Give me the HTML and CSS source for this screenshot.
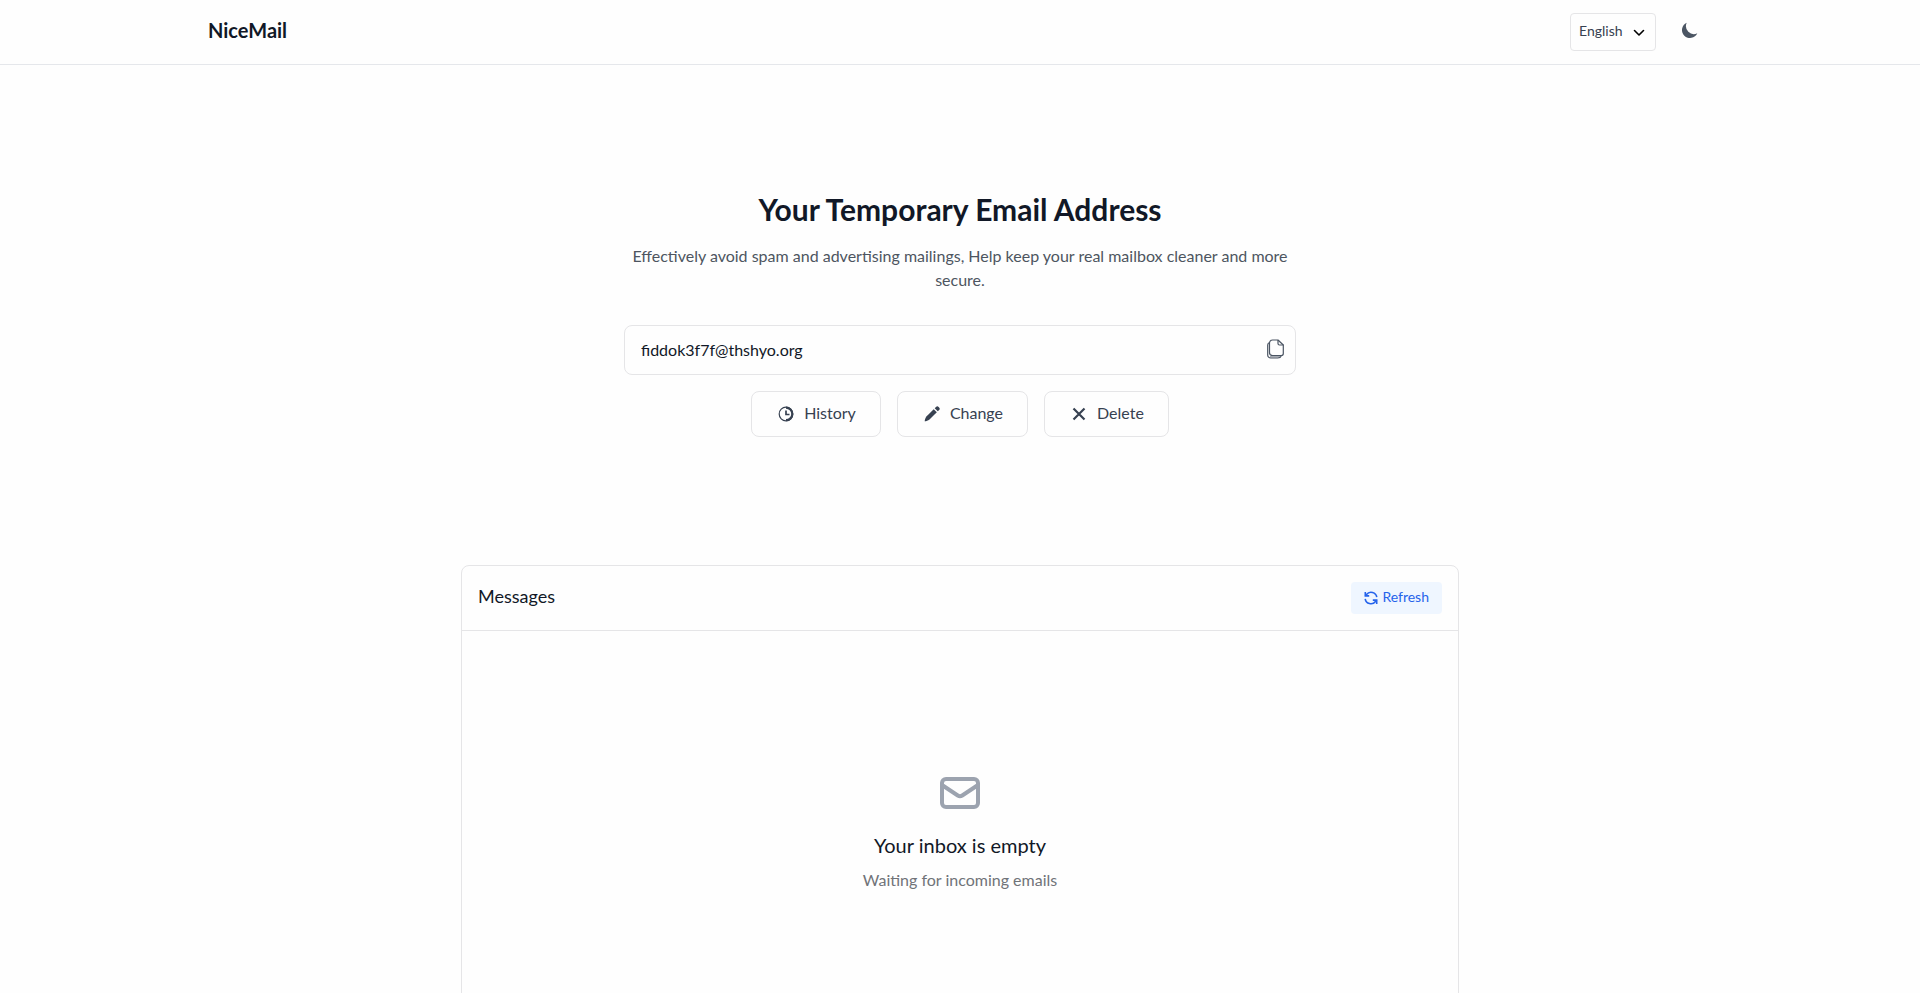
FILE: index.html
```html
<!DOCTYPE html>
<html lang="en">
<head>
  <meta charset="UTF-8">
  <meta name="viewport" content="width=device-width, initial-scale=1.0">
  <title>NiceMail</title>
  <link rel="stylesheet" href="styles.css">
</head>
<body>
  <header class="header">
    <div class="container nav">
      <a class="logo" href="/">NiceMail</a>
      <div class="nav-right">
        <div class="lang">
          <select id="lang" class="lang-select" aria-label="Language">
            <option>English</option>
          </select>
          <svg class="lang-arrow" viewBox="0 0 12 8" aria-hidden="true"><path d="M1.500 1.500 6 6l4.500-4.500" fill="none" stroke="currentColor" stroke-width="1.600" stroke-linecap="round" stroke-linejoin="round"/></svg>
        </div>
        <button id="theme" class="theme-btn" type="button" aria-label="Dark mode">
          <svg viewBox="0 0 20 20" fill="currentColor"><path d="M17.293 13.293A8 8 0 016.707 2.707a8.001 8.001 0 1010.586 10.586z"/></svg>
        </button>
      </div>
    </div>
  </header>

  <main>
    <section class="hero">
      <h1>Your Temporary Email Address</h1>
      <p>Effectively avoid spam and advertising mailings, Help keep your real mailbox cleaner and more secure.</p>
      <div class="address">
        <input type="text" id="email" aria-label="Email address" value="fiddok3f7f@thshyo.org" readonly>
        <button id="copy" class="copy-btn" type="button" aria-label="Copy">
          <svg viewBox="0 0 20 20" fill="none" stroke="currentColor" stroke-linejoin="round">
            <path d="M3.500 3.500C2 4 1.700 4.500 1.700 6v10a3 3 0 0 0 3 3h7c2 0 3-.5 3.500-2" stroke-width="1.200"/>
            <path d="M4 17.700h10" stroke-width="1.600" opacity=".5"/>
            <path d="M6.500 1h5.500l5.300 5v8.500a2 2 0 0 1-2 2H6.500a3 3 0 0 1-3-3V4a3 3 0 0 1 3-3z" stroke-width="1.200"/>
            <path d="M12 1v3.500A1.500 1.500 0 0 0 13.500 6h4" stroke-width="1.200"/>
          </svg>
        </button>
      </div>
      <div class="actions">
        <button id="history" class="btn" type="button">
          <svg viewBox="0 0 16 16" fill="none" stroke="currentColor"><path d="M8 1.200a6.800 6.800 0 1 0 0 13.600A6.800 6.800 0 0 0 8 1.200" stroke-width="1.200"/><path d="M8 1.600a6.200 6.200 0 0 1 0 12.600" stroke-width="2.200"/><path d="M8 4.500v4h3.500" stroke-width="1.700"/></svg>
          History
        </button>
        <button id="change" class="btn" type="button">
          <svg viewBox="0 0 16 16" fill="currentColor"><path d="M9.700 3.200l3.100 3.100-7.300 7.200C4 14.600 2.200 15.300.7 15.300c0-1.500.6-3.400 1.700-4.900z"/><path d="M10.700 2.200 12 .9a1.800 1.800 0 0 1 2.600 0l.5.500a1.800 1.800 0 0 1 0 2.600l-1.300 1.300z"/></svg>
          Change
        </button>
        <button id="delete" class="btn" type="button">
          <svg viewBox="0 0 16 16" fill="none" stroke="currentColor" stroke-width="2.200"><path d="M2.500 2.500l11 11M13.500 2.500l-11 11"/></svg>
          Delete
        </button>
      </div>
    </section>

    <section class="messages">
      <div class="messages-head">
        <h2>Messages</h2>
        <button id="refresh" class="refresh-btn" type="button">
          <svg viewBox="0 0 14 14" fill="none" stroke="currentColor" stroke-width="1.600"><path d="M12.800 6.200A5.800 5.800 0 0 0 2.500 3.500L1.300 4.700M1.200 7.800a5.800 5.800 0 0 0 10.300 2.700l1.200-1.200"/><path d="M1.300 1v3.900h3.900M12.700 13V9.100H8.800"/></svg>
          Refresh
        </button>
      </div>
      <div class="empty">
        <svg viewBox="0 0 24 24" fill="none" stroke="currentColor" stroke-width="2" stroke-linecap="round" stroke-linejoin="round"><path d="M3 8l7.890 5.260a2 2 0 002.220 0L21 8M5 19h14a2 2 0 002-2V7a2 2 0 00-2-2H5a2 2 0 00-2 2v10a2 2 0 002 2z"/></svg>
        <h3>Your inbox is empty</h3>
        <p>Waiting for incoming emails</p>
      </div>
    </section>
  </main>
</body>
</html>
```

FILE: styles.css
```css
* {
  box-sizing: border-box;
}
body {
  margin: 0;
  font-family: Lato, sans-serif;
  font-size: 16px;
  line-height: 24px;
  color: #111827;
  background: #fefefe;
  overflow: hidden;
}
h1, h2, h3, p {
  margin: 0;
}
button, input, select {
  font: inherit;
  color: inherit;
}
button {
  cursor: pointer;
}
svg {
  display: block;
}
.header {
  border-bottom: 1px solid #e5e7eb;
}
.container {
  max-width: 1536px;
  margin: 0 auto;
  padding: 0 16px;
}
.nav {
  display: flex;
  align-items: center;
  justify-content: space-between;
  height: 64px;
}
.logo {
  padding-bottom: 4px;
  font-size: 20px;
  font-weight: 700;
  line-height: 28px;
  color: #111827;
  text-decoration: none;
}
.nav-right {
  display: flex;
  align-items: center;
  gap: 12px;
}
.lang {
  position: relative;
}
.lang-select {
  width: 86px;
  height: 38px;
  padding: 0 8px 2px;
  font-size: 14px;
  color: #374151;
  background: transparent;
  border: 1px solid #e5e5e7;
  border-radius: 4px;
  appearance: none;
}
.lang-arrow {
  position: absolute;
  right: 11px;
  top: 16px;
  width: 12px;
  height: 8px;
  color: #000;
  pointer-events: none;
}
.theme-btn {
  padding: 10px 12px 14px;
  color: #4b5563;
  background: none;
  border: 0;
}
.theme-btn svg {
  width: 20px;
  height: 20px;
}
.hero {
  max-width: 672px;
  margin: 0 auto;
  padding: 124px 0 128px;
  text-align: center;
}
.hero h1 {
  font-size: 30px;
  font-weight: 700;
  line-height: 40px;
}
.hero p {
  margin-top: 15px;
  color: #4d5560;
}
.address {
  position: relative;
  margin-top: 33px;
}
.address input {
  display: block;
  width: 100%;
  height: 50px;
  padding: 0 48px 2px 16px;
  background: transparent;
  border: 1px solid #e5e5e7;
  border-radius: 8px;
}
.copy-btn {
  position: absolute;
  top: 14px;
  right: 10px;
  padding: 0;
  color: #4b5563;
  background: none;
  border: 0;
}
.copy-btn svg {
  width: 20px;
  height: 20px;
}
.actions {
  display: flex;
  justify-content: center;
  gap: 16px;
  margin-top: 16px;
}
.btn {
  display: flex;
  align-items: center;
  gap: 10px;
  padding: 9px 24px 11px 26px;
  color: #374151;
  background: transparent;
  border: 1px solid #e5e5e7;
  border-radius: 8px;
}
.btn svg {
  width: 16px;
  height: 16px;
  margin-top: 2px;
}
.messages {
  width: calc(100% - 32px);
  max-width: 998px;
  margin: 0 auto;
  border: 1px solid #e5e5e7;
  border-radius: 8px;
}
.messages-head {
  display: flex;
  align-items: center;
  justify-content: space-between;
  padding: 16px;
  border-bottom: 1px solid #e5e5e7;
}
.messages-head h2 {
  padding-bottom: 4px;
  font-size: 18px;
  font-weight: 400;
  line-height: 28px;
}
.refresh-btn {
  display: flex;
  align-items: center;
  gap: 4px;
  padding: 3px 13px 5px;
  font-size: 14px;
  color: #2563eb;
  background: #eff6ff;
  border: 0;
  border-radius: 4px;
}
.refresh-btn svg {
  width: 14px;
  height: 14px;
  margin-top: 2px;
}
.empty {
  display: flex;
  flex-direction: column;
  align-items: center;
  padding: 138px 16px;
}
.empty svg {
  width: 48px;
  height: 48px;
  color: #9ca3af;
}
.empty h3 {
  margin-top: 14px;
  font-size: 20px;
  font-weight: 400;
  line-height: 28px;
}
.empty p {
  margin-top: 9px;
  color: #707378;
}
```
